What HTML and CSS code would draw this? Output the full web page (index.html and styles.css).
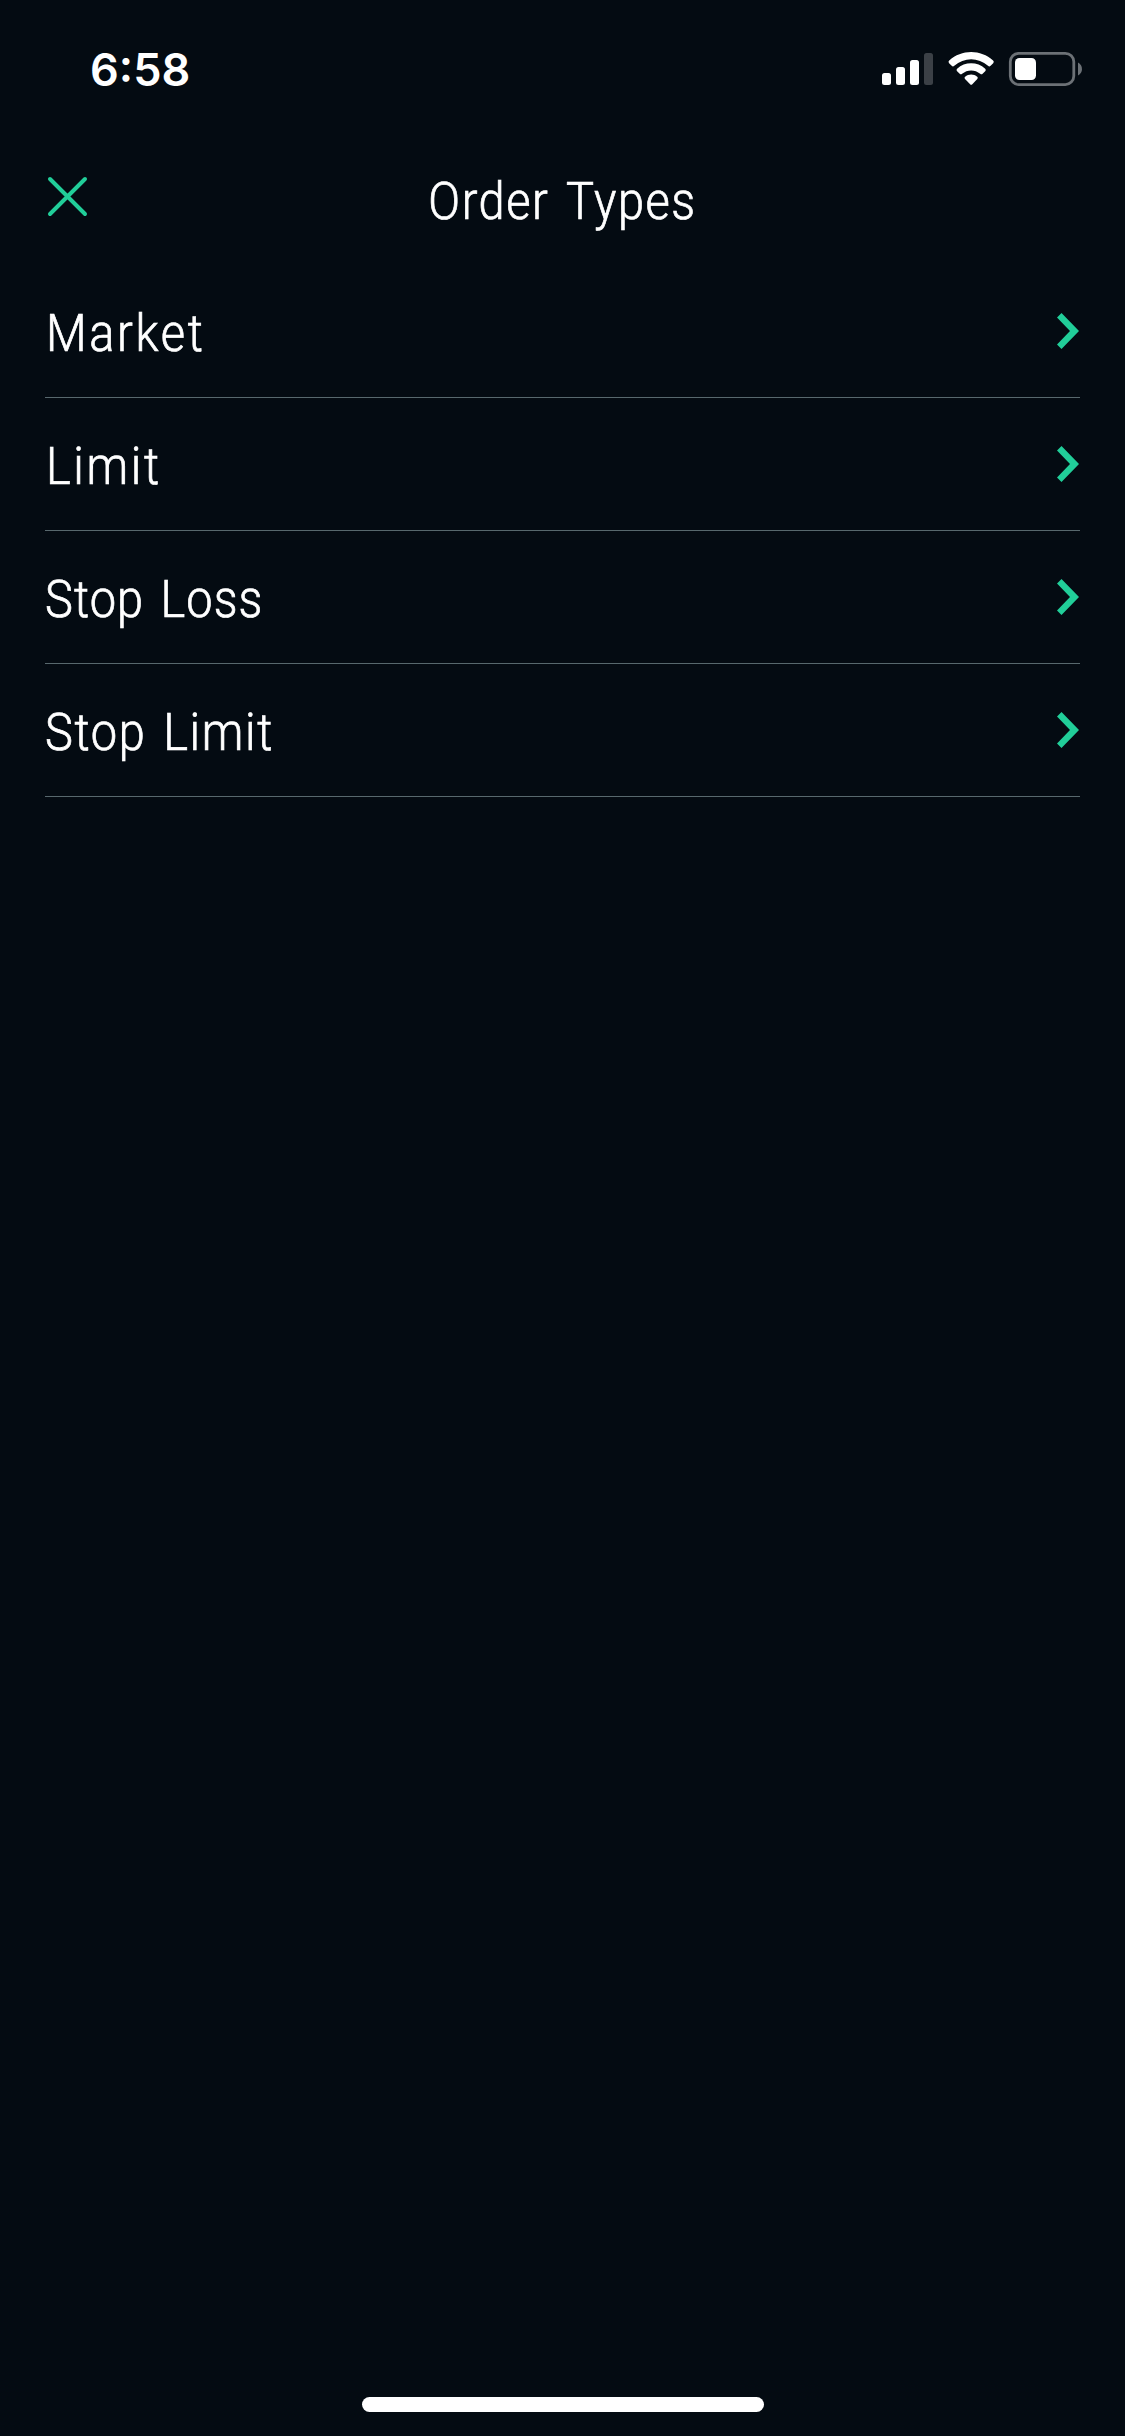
FILE: index.html
```html
<!DOCTYPE html>
<html lang="en">
<head>
<meta charset="utf-8">
<title>Order Types</title>
<link rel="stylesheet" href="styles.css">
</head>
<body>
<div class="screen">
  <div class="status">
    <span class="time">6:58</span>
    <svg class="indicators" width="206" height="40" viewBox="880 49 206 40" aria-hidden="true">
      <g fill="#fff">
        <rect x="882" y="73" width="9" height="12" rx="2.5"/>
        <rect x="896" y="67" width="9" height="18" rx="2.5"/>
        <rect x="910" y="60" width="9" height="25" rx="2.5"/>
        <rect x="924" y="53" width="9" height="32" rx="2.5" opacity=".22"/>
        <path d="M949.2 60.6C961.5 49.1 980.8 49.1 993.1 60.6Q994.5 61.9 993.2 63.2L990.6 65.8Q989.4 67 988 65.8C978.3 56.9 964 56.9 954.3 65.8Q952.9 67 951.7 65.8L949.1 63.2Q947.8 61.9 949.2 60.6Z"/>
        <path d="M957.1 68.7C964.9 61.5 977.4 61.5 985.2 68.7Q986.5 69.9 985.2 71.2L982.6 73.8Q981.5 74.9 980.2 73.8C975 69.3 967.3 69.3 962.1 73.8Q960.8 74.9 959.7 73.8L957.1 71.2Q955.8 69.9 957.1 68.7Z"/>
        <path d="M965.1 76.7C968.4 73.9 973.9 73.9 977.2 76.7Q978.4 77.8 977.3 79L972.3 84.2Q971.2 85.3 970.1 84.2L965 79Q963.9 77.8 965.1 76.7Z"/>
        <rect x="1015" y="58" width="21" height="22" rx="4.5"/>
      </g>
      <rect x="1010.3" y="53.3" width="63.5" height="31.3" rx="8.5" fill="none" stroke="#6c7176" stroke-width="2.8"/>
      <path d="M1078 62.5C1083.3 65 1083.3 73 1078 75.5Z" fill="#6c7176"/>
    </svg>
  </div>
  <header class="header">
    <svg class="close" width="42" height="42" viewBox="0 0 42 42" aria-label="Close"><path d="M3 3L38 38M38 3L3 38"/></svg>
    <h1 class="label title">Order Types</h1>
  </header>
  <ul class="list">
    <li class="row"><span class="label market">Market</span><svg class="chevron" width="24" height="38" viewBox="0 0 24 38"><path d="M1 5.5L5.5 1L23 19L5.5 37L1 32.5L14 19Z"/></svg></li>
    <li class="row"><span class="label limit">Limit</span><svg class="chevron" width="24" height="38" viewBox="0 0 24 38"><path d="M1 5.5L5.5 1L23 19L5.5 37L1 32.5L14 19Z"/></svg></li>
    <li class="row"><span class="label stop-loss">Stop Loss</span><svg class="chevron" width="24" height="38" viewBox="0 0 24 38"><path d="M1 5.5L5.5 1L23 19L5.5 37L1 32.5L14 19Z"/></svg></li>
    <li class="row"><span class="label stop-limit">Stop Limit</span><svg class="chevron" width="24" height="38" viewBox="0 0 24 38"><path d="M1 5.5L5.5 1L23 19L5.5 37L1 32.5L14 19Z"/></svg></li>
  </ul>
  <div class="home"></div>
</div>
</body>
</html>
```
FILE: styles.css
```css
* { box-sizing: border-box; }
body { margin: 0; background: #040b12; color: #fff; }
.screen { width: 1125px; height: 2436px; display: flex; flex-direction: column; }
.status { height: 132px; padding: 49px 39px 0 90px; display: flex; justify-content: space-between; align-items: flex-start; }
.time { font: 600 45px/41px Inter, sans-serif; letter-spacing: 0; }
.indicators { display: block; }
.header { height: 133px; padding: 0 45px; display: grid; grid-template-columns: 42px 1fr 42px; align-items: center; }
.close { display: block; margin: 0 0 3px 2px; fill: none; stroke: #21ce99; stroke-width: 4; stroke-linecap: round; }
.label { margin: 0; padding-top: 6px; font: 300 51px/60px Roboto, sans-serif; white-space: nowrap; -webkit-text-stroke: 0.7px #fff; transform: scaleX(0.92); transform-origin: left center; }
.title { text-align: center; letter-spacing: 1.7px; word-spacing: 5px; transform-origin: center; }
.market { padding-left: 1px; letter-spacing: 2.9px; }
.limit { padding-left: 1px; letter-spacing: 2.9px; }
.stop-loss { letter-spacing: 1.2px; word-spacing: 4px; }
.stop-limit { letter-spacing: 1.8px; word-spacing: 4px; }
.list { list-style: none; margin: 0; padding: 0 45px; }
.row { height: 133px; border-bottom: 1px solid #58686d; display: flex; align-items: center; justify-content: space-between; }
.chevron { display: block; fill: #21ce99; }
.home { width: 402px; height: 15px; margin: auto auto 24px; border-radius: 8px; background: #fff; }
```
